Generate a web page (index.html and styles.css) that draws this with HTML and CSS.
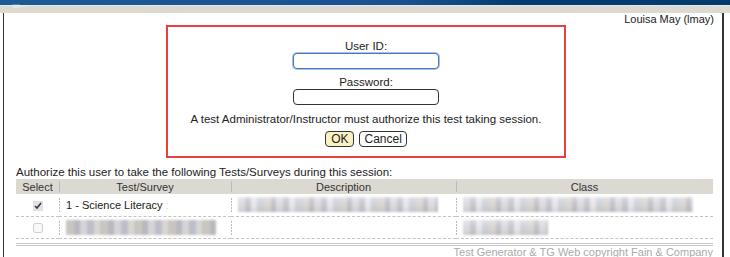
FILE: index.html
```html
<!DOCTYPE html>
<html lang="en">

<head>
    <meta charset="UTF-8">
    <title>Test Session</title>
    <link rel="stylesheet" href="styles.css">
</head>

<body>
    <div class="topbar"></div>
    <div class="subbar"><span class="arrows">&#187;&#187;&#183;&#183;&#183;</span></div>

    <div class="frame">
        <div class="user">Louisa May (lmay)</div>

        <div class="authbox">
            <div class="label">User ID:</div>
            <input id="userid" class="field focused" type="text">
            <div class="label">Password:</div>
            <input id="password" class="field" type="password">
            <div class="message">A test Administrator/Instructor must authorize this test taking session.</div>
            <div class="buttons">
                <button class="btn btn-ok">OK</button>
                <button class="btn">Cancel</button>
            </div>
        </div>

        <div class="intro">Authorize this user to take the following Tests/Surveys during this session:</div>
        <table class="tests">
            <tr class="head">
                <th class="c-select">Select</th>
                <th class="c-test">Test/Survey</th>
                <th class="c-desc">Description</th>
                <th class="c-class">Class</th>
            </tr>
            <tr>
                <td class="c-select"><input class="picked" type="checkbox" checked></td>
                <td class="c-test">1 - Science Literacy <span class="colon">:</span></td>
                <td class="c-desc"><div class="blur" style="width: 200px"></div></td>
                <td class="c-class"><div class="blur" style="width: 230px"></div></td>
            </tr>
            <tr>
                <td class="c-select"><input type="checkbox" disabled></td>
                <td class="c-test"><div class="blur alt" style="width: 150px"></div></td>
                <td class="c-desc"></td>
                <td class="c-class"><div class="blur" style="width: 85px"></div></td>
            </tr>
        </table>

        <div class="footer">Test Generator &amp; TG Web copyright <a href="#">Fain &amp; Company</a></div>
    </div>
</body>

</html>
```

FILE: styles.css
```css
* {
    box-sizing: border-box;
}

body {
    margin: 0;
    font-family: "Liberation Sans", Arial, sans-serif;
    color: #222;
    background-color: white;
}

.topbar {
    height: 5px;
    background: linear-gradient(90deg, #1d5a96 0%, #1a5290 55%, #063d70 70%, #043a6b 100%);
}

.subbar {
    height: 8px;
    background-color: #dcd9d2;
    border-top: 1px solid #e9e7e2;
    position: relative;
}

.arrows {
    position: absolute;
    left: 12px;
    top: -5px;
    font-size: 9px;
    color: #f3f1ec;
    letter-spacing: -1px;
}

.frame {
    margin-left: 3px;
    width: 721px;
    height: 244px;
    border-left: 1px solid #333;
    border-right: 2px solid #333;
    padding: 0 8px 0 12px;
}

.user {
    text-align: right;
    font-size: 11px;
    line-height: 12px;
    height: 12px;
}

.authbox {
    width: 400px;
    margin-left: 150px;
    height: 133px;
    border: 2px solid #e8403a;
    text-align: center;
    padding-top: 13px;
}

.label {
    font-size: 11.5px;
    line-height: 13px;
}

.field {
    display: block;
    margin: 0 auto;
    width: 146px;
    height: 16px;
    border: 1px solid #333;
    border-radius: 4px;
    padding: 0;
}

.field.focused {
    border-color: #4a78b8;
    box-shadow: 0 0 0 1px #a8c2e4;
}

.field + .label {
    margin-top: 7px;
}

.message {
    margin-top: 7px;
    font-size: 11.5px;
    line-height: 14px;
}

.buttons {
    margin-top: 5px;
    display: flex;
    justify-content: center;
    gap: 5px;
}

.btn {
    height: 16px;
    padding: 0 4px;
    font-family: "Liberation Sans", Arial, sans-serif;
    font-size: 12px;
    line-height: 13px;
    color: #222;
    background-color: white;
    border: 1px solid #333;
    border-radius: 4px;
}

.btn-ok {
    padding: 0 5px;
    background-color: #fbf2c2;
}

.intro {
    margin-top: 7px;
    font-size: 11.5px;
    line-height: 14px;
}

.tests {
    width: 697px;
    border-collapse: collapse;
    font-size: 11px;
}

.tests th {
    height: 15px;
    padding: 0;
    font-weight: normal;
    color: #333;
    background-color: #dcd9d2;
    background-image: linear-gradient(#bbb, #bbb);
    background-size: 1px 11px;
    background-position: left 2px;
    background-repeat: no-repeat;
}

.tests th.c-select {
    background-image: none;
}

.tests td {
    height: 22px;
    padding: 0 0 0 7px;
    border-bottom: 1px dashed #c4c4c4;
    background-image: repeating-linear-gradient(#bbb 0 2px, transparent 2px 3px);
    background-size: 1px 14px;
    background-position: left 4px;
    background-repeat: no-repeat;
    vertical-align: middle;
}

.tests td.c-select {
    background-image: none;
    text-align: center;
    padding: 0;
}

.c-select {
    width: 43px;
}

.c-test {
    width: 172px;
}

.c-desc {
    width: 225px;
}

.tests input[type=checkbox] {
    width: 10px;
    height: 10px;
    margin: 0;
    vertical-align: middle;
}

.tests input.picked {
    accent-color: #e2e2e2;
}

.colon {
    color: #e8d89a;
}

.blur {
    height: 15px;
    background:
        linear-gradient(rgba(255, 255, 255, 0.35), rgba(255, 255, 255, 0) 45%, rgba(255, 255, 255, 0) 55%, rgba(120, 120, 130, 0.15)),
        repeating-linear-gradient(90deg, #dcdbe0 0 7px, #c8c7cd 7px 13px, #e7e6ea 13px 19px, #cfd3d9 19px 26px, #d9d6d3 26px 33px, #c3c2c8 33px 38px);
    filter: blur(0.8px);
}

.blur.alt {
    background:
        repeating-linear-gradient(90deg, #c9c6c2 0 8px, #b9b8be 8px 14px, #d4d3d6 14px 21px, #bcbfc8 21px 28px, #d7d6d3 28px 34px);
}

.footer {
    margin-top: 4px;
    border-top: 3px double #c8c8c8;
    width: 697px;
    text-align: right;
    font-size: 11px;
    line-height: 12px;
    color: #aaa;
}

.footer a {
    color: #aaa;
}
```
